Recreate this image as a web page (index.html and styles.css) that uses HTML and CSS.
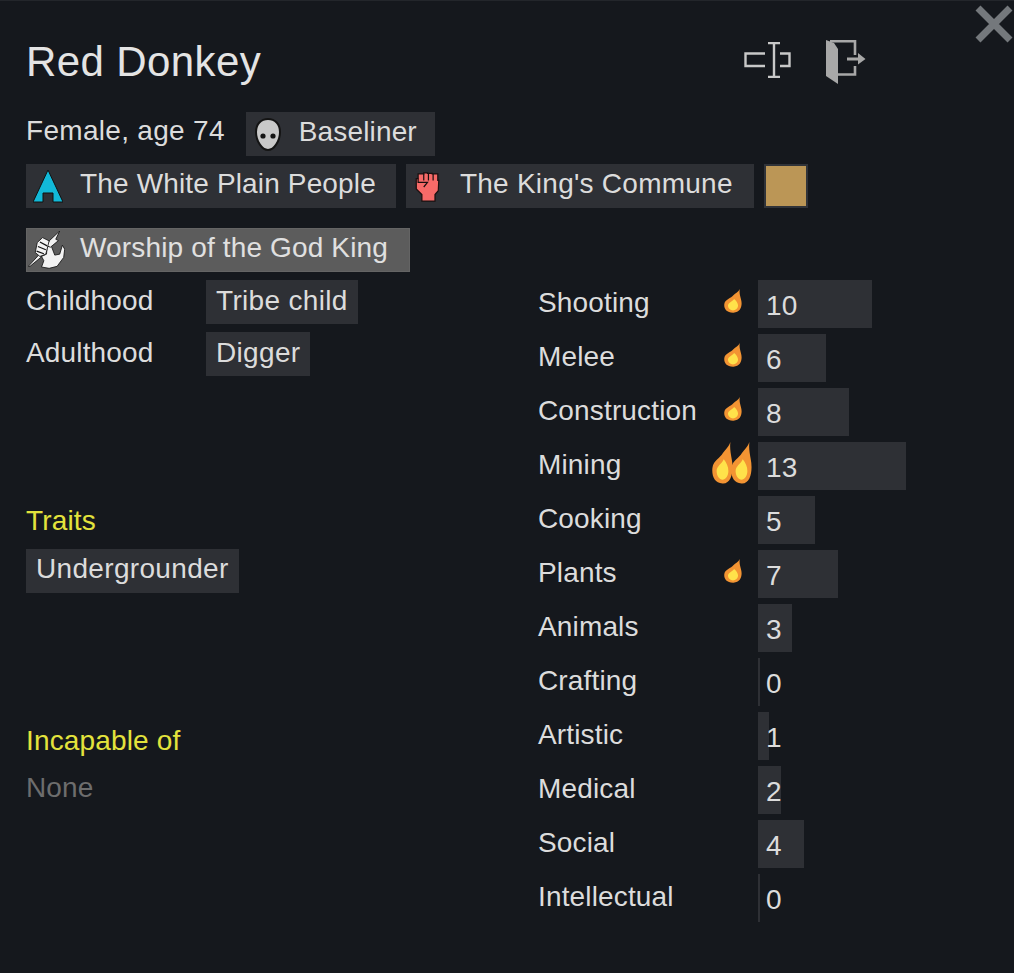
FILE: index.html
```html
<!DOCTYPE html>
<html lang="en">
<head>
<meta charset="utf-8">
<title>Red Donkey</title>
<link rel="stylesheet" href="styles.css">
</head>
<body>
<svg class="defs" width="0" height="0" aria-hidden="true">
  <symbol id="flame" viewBox="0 0 50 68" preserveAspectRatio="none">
    <path fill="#f39433" d="M44 0C42 8 44 16 47 28C52 44 48 68 25 67C6 67 -1 55 1 42C3 30 20 26 26 18C32 12 40 8 44 0Z"/>
    <path fill="#ffe24a" d="M28 28C35 34 39 40 39 47C39 55 32 61 25 61C18 61 11 55 11 47C11 39 23 36 28 28Z"/>
  </symbol>
</svg>
<main class="panel">
  <svg class="close" viewBox="0 0 38 38" aria-hidden="true"><path d="M3 3L35 35M35 3L3 35" stroke="#74787c" stroke-width="7" fill="none"/></svg>
  <header class="head">
    <h1 class="title">Red Donkey</h1>
    <div class="actions">
      <svg class="ico-rename" viewBox="0 0 48 36" aria-hidden="true">
        <path fill="none" stroke="#c8c8c8" stroke-width="2.4" d="M21 11.500H1.500V24H21M36 11.500H45.500V24H36M24 1H36M30 1V35M24 35H36"/>
      </svg>
      <svg class="ico-door" viewBox="0 0 40 44" aria-hidden="true">
        <path fill="#a8a8a8" d="M0 0L8 3L12 9V44L0 36Z"/>
        <path fill="none" stroke="#a8a8a8" stroke-width="2.6" d="M4 1.300H29V15M29 26V34.500H12"/>
        <path fill="#a8a8a8" d="M21 17.500H32V13L39.500 19L32 24.500V20.500H21Z"/>
      </svg>
    </div>
  </header>

  <div class="line">
    <span class="plain">Female, age 74</span>
    <span class="tag tag-xeno">
      <svg class="ico-mask" viewBox="0 0 26 33" aria-hidden="true"><path fill="#c9c9c9" stroke="#141414" stroke-width="2" d="M13 1C20 1 25 6 25 14C25 23 19 32 13 32C7 32 1 23 1 14C1 6 6 1 13 1Z"/><circle cx="8" cy="18" r="2.600" fill="#141414"/><circle cx="18" cy="18" r="2.600" fill="#141414"/></svg>
      <span>Baseliner</span>
    </span>
  </div>
  <div class="line">
    <span class="tag tag-wide">
      <svg class="ico-tent" viewBox="0 0 30 34" aria-hidden="true"><path fill="#12b9d8" stroke="#111" stroke-width="1" d="M15 1L30 33H20V24H10V33H0Z"/></svg>
      <span>The White Plain People</span>
    </span>
    <span class="tag tag-wide tag-commune">
      <svg class="ico-fist" viewBox="0 0 26 32" aria-hidden="true"><path fill="#f76a68" stroke="#1a1010" stroke-width="1.300" d="M3 2H9V1H13V1.500H18V2H24V9H25L24.500 20L21 24V31H7V24L1 18V7H3Z"/><path fill="none" stroke="#1a1010" stroke-width="1.300" d="M9 1.500V9M14 1.500V9M19 2V9M3 7V11H13L9 16"/></svg>
      <span>The King's Commune</span>
    </span>
    <span class="swatch"></span>
  </div>
  <div class="line line-ideo">
    <span class="tag tag-wide tag-ideo">
      <svg class="ico-ideo" viewBox="25 15 110 115" aria-hidden="true">
        <g fill="#f2f2f2" stroke="#111" stroke-width="2.500" stroke-linejoin="round">
          <path d="M25 122L58 86L64 94L30 122Z"/>
          <path d="M82 62L95 62L105 88L120 85L128 58L135 70L132 95L112 122L88 128L65 124L72 105L65 92L80 85Z"/>
          <path d="M88 45L120 15L108 40L116 44L92 64L80 60Z"/>
          <path d="M52 50L68 35L88 45L78 85L60 92L46 80Z"/>
        </g>
        <path fill="none" stroke="#111" stroke-width="3.500" d="M60 48L82 60M54 62L78 72M50 76L72 84"/>
      </svg>
      <span>Worship of the God King</span>
    </span>
  </div>

  <section class="columns">
    <div class="left">
      <div class="back-row"><span class="back-label">Childhood</span><span class="tag tag-plain"><span>Tribe child</span></span></div>
      <div class="back-row"><span class="back-label">Adulthood</span><span class="tag tag-plain"><span>Digger</span></span></div>
      <h2 class="heading heading-traits">Traits</h2>
      <div class="traits"><span class="tag tag-plain"><span>Undergrounder</span></span></div>
      <h2 class="heading heading-incap">Incapable of</h2>
      <p class="none">None</p>
    </div>
    <div class="skills">
      <div class="skill"><span class="skill-name">Shooting</span><span class="passion"><svg class="flame"><use href="#flame"/></svg></span><span class="value" style="background-size:114px 100%">10</span></div>
      <div class="skill"><span class="skill-name">Melee</span><span class="passion"><svg class="flame"><use href="#flame"/></svg></span><span class="value" style="background-size:68px 100%">6</span></div>
      <div class="skill"><span class="skill-name">Construction</span><span class="passion"><svg class="flame"><use href="#flame"/></svg></span><span class="value" style="background-size:91px 100%">8</span></div>
      <div class="skill"><span class="skill-name">Mining</span><span class="passion"><svg class="flame-big"><use href="#flame"/></svg><svg class="flame-big flame-last"><use href="#flame"/></svg></span><span class="value" style="background-size:148px 100%">13</span></div>
      <div class="skill"><span class="skill-name">Cooking</span><span class="passion"></span><span class="value" style="background-size:57px 100%">5</span></div>
      <div class="skill"><span class="skill-name">Plants</span><span class="passion"><svg class="flame"><use href="#flame"/></svg></span><span class="value" style="background-size:80px 100%">7</span></div>
      <div class="skill"><span class="skill-name">Animals</span><span class="passion"></span><span class="value" style="background-size:34px 100%">3</span></div>
      <div class="skill"><span class="skill-name">Crafting</span><span class="passion"></span><span class="value" style="background-size:2px 100%">0</span></div>
      <div class="skill"><span class="skill-name">Artistic</span><span class="passion"></span><span class="value" style="background-size:11px 100%">1</span></div>
      <div class="skill"><span class="skill-name">Medical</span><span class="passion"></span><span class="value" style="background-size:23px 100%">2</span></div>
      <div class="skill"><span class="skill-name">Social</span><span class="passion"></span><span class="value" style="background-size:46px 100%">4</span></div>
      <div class="skill"><span class="skill-name">Intellectual</span><span class="passion"></span><span class="value" style="background-size:2px 100%">0</span></div>
    </div>
  </section>
</main>
</body>
</html>
```
FILE: styles.css
```css
* { box-sizing: border-box; }
html, body { margin: 0; height: 100%; }
body {
  background: #15181d;
  color: #dcdcdc;
  font-family: "Liberation Sans", Arial, sans-serif;
  font-size: 28px;
  letter-spacing: 0.15px;
  line-height: 44px;
  overflow: hidden;
}
.defs { position: absolute; }
.panel { position: relative; height: 973px; padding: 0 0 0 26px; border-top: 1px solid #23262b; }
.close { position: absolute; left: 975px; top: 4px; width: 38px; height: 38px; }
.head { display: flex; height: 111px; padding-top: 37px; }
.title { margin: 0; width: 717px; font-size: 42px; font-weight: 400; letter-spacing: 0.4px; line-height: 48px; color: #e4e4e4; }
.actions { display: flex; align-items: flex-start; gap: 34px; margin-left: 1px; }
.ico-rename { width: 48px; height: 36px; margin-top: 4px; }
.ico-door { width: 40px; height: 44px; margin-top: 2px; }
.line { display: flex; align-items: center; gap: 10px; height: 44px; margin-bottom: 8px; }
.line-ideo { margin-top: 20px; }
.plain { margin-right: 11px; padding-bottom: 6px; letter-spacing: 0.3px; }
.tag { display: inline-flex; align-items: center; height: 44px; padding: 0 10px; background: #2e3035; line-height: 38px; white-space: nowrap; }
.tag > span { padding-bottom: 5px; }
.tag-plain { letter-spacing: 0.33px; }
.tag-plain > span { padding-bottom: 3px; }
.tag-xeno { padding-right: 18px; }
.tag-wide { padding-right: 20px; }
.tag-commune { letter-spacing: 0.25px; padding-right: 21px; }
.ico-mask { width: 26px; height: 33px; flex: none; margin: 1px 18px 0 -1px; }
.ico-tent { width: 30px; height: 34px; flex: none; margin: 0 17px 0 -3px; }
.ico-fist { width: 25px; height: 30px; flex: none; margin: 1px 20px 0 -1px; }
.ico-ideo { width: 37px; height: 38px; flex: none; margin: 0 15px 0 -8px; }
.swatch { width: 44px; height: 44px; background: #bb9656; border: 2px solid #303339; }
.tag-ideo { background: #5c5c5c; border: 1px solid #646464; color: #e0e0e0; padding-left: 9px; padding-right: 21px; }
.columns { display: flex; }
.left { width: 512px; flex: none; }
.back-row { display: flex; align-items: center; height: 44px; margin-bottom: 8px; }
.back-label { width: 180px; padding-bottom: 2px; }
.heading { margin: 0; font-size: 28px; font-weight: 400; color: #e3e33c; line-height: 44px; }
.heading-traits { margin-top: 123px; }
.traits { margin-top: 4px; }
.heading-incap { margin-top: 126px; }
.none { margin: 3px 0 0; color: #6d6d6d; }
.skills { display: flex; flex-direction: column; gap: 6px; }
.skill { display: flex; height: 48px; }
.skill-name { width: 220px; flex: none; line-height: 46px; }
.passion { display: flex; justify-content: flex-end; align-items: flex-start; width: 0; position: relative; }
.flame { display: block; flex: none; width: 18px; height: 24px; margin: 9px 16px 0 0; }
.flame-big { display: block; flex: none; width: 21px; height: 42px; margin-right: -2px; }
.flame-last { margin-right: 6px; }
.value {
  display: block;
  width: 200px;
  padding-left: 8px;
  line-height: 52px;
  background-image: linear-gradient(#2e3035, #2e3035);
  background-repeat: no-repeat;
}
```
